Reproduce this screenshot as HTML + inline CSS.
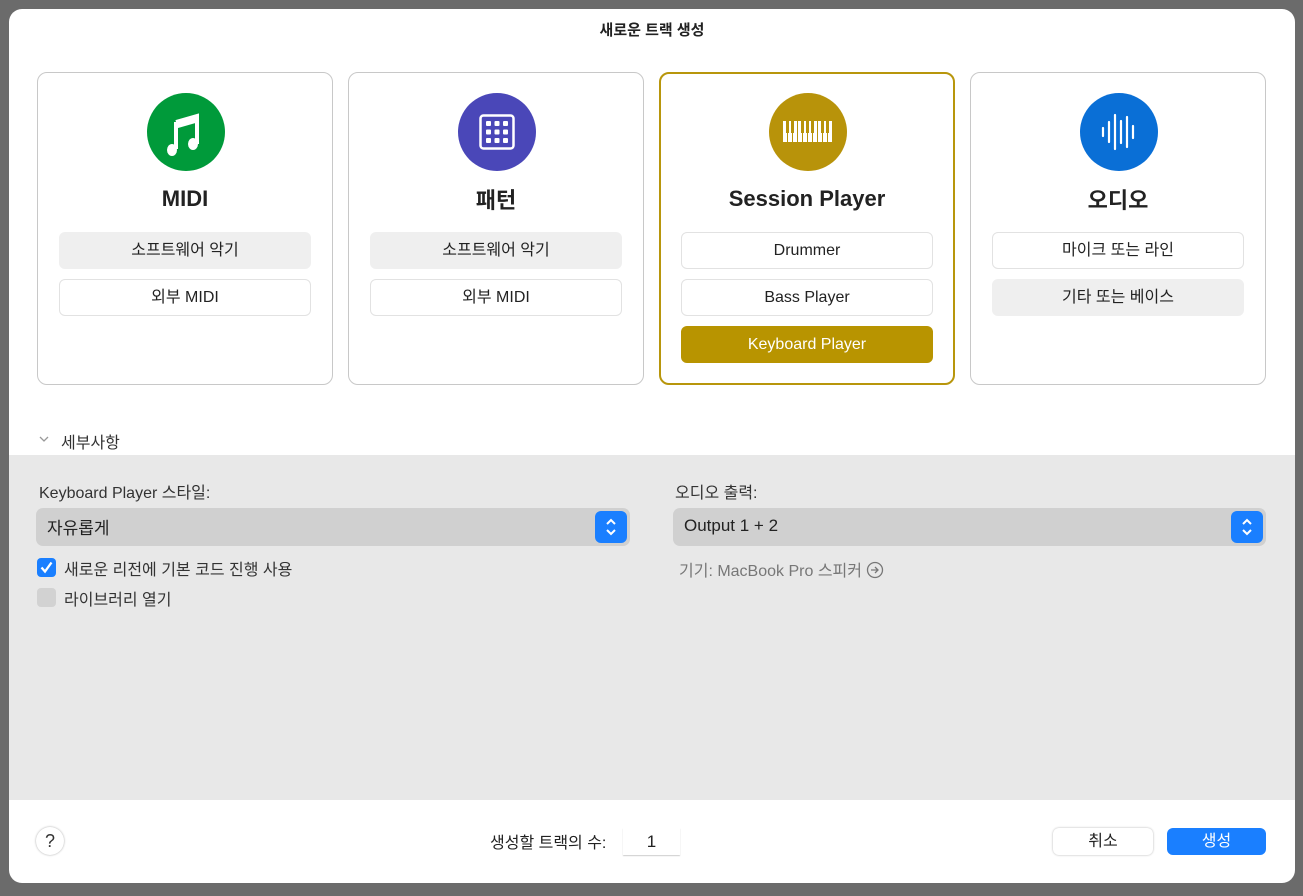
<!DOCTYPE html>
<html><head><meta charset="utf-8"><style>
*{box-sizing:border-box;margin:0;padding:0}
body{width:1303px;height:896px;background:#6b6b6b;font-family:"Liberation Sans","Noto Sans CJK KR",sans-serif;position:relative;overflow:hidden;color:#222}
.dlg{position:absolute;left:9px;top:9px;width:1286px;height:874px;background:#fff;border-radius:13px;overflow:hidden}
.title{position:absolute;top:10px;left:0;width:100%;text-align:center;font-size:15px;font-weight:bold;color:#222}
.card{position:absolute;top:63px;width:296px;height:313px;border:1.5px solid #c8c8c8;border-radius:10px;background:#fff}
.card.sel{border:2px solid #b8960c}
.circ{position:absolute;left:109px;top:20px;width:78px;height:78px;border-radius:50%}
.ct{position:absolute;top:113px;width:100%;text-align:center;font-size:22px;font-weight:bold;color:#222}
.ct.k{top:110px}
.btn{position:absolute;left:21px;width:252px;height:37px;border-radius:6px;font-size:16px;text-align:center;line-height:37px;color:#222}
.g{background:#efefef}
.w{background:#fff;border:1px solid #e2e2e2;line-height:35px}
.gray{position:absolute;left:0;top:446px;width:100%;height:345px;background:#e8e8e8}
.lbl{position:absolute;font-size:16px;color:#333}
.select{position:absolute;height:38px;background:#d0d0d0;border-radius:7px}
.step{position:absolute;right:3px;top:3px;width:32px;height:32px;background:#1a7fff;border-radius:6px}
.cb{position:absolute;width:19px;height:19px;border-radius:4px}
</style></head><body>
<div class="dlg">
<div class="title">새로운 트랙 생성</div>

<div class="card" style="left:28px">
 <div class="circ" style="background:#009a3a"><svg width="78" height="78" viewBox="0 0 78 78"><path d="M29 29 L50 23 L50 51" stroke="#fff" stroke-width="4" fill="none"/><path d="M29 29 L29 56" stroke="#fff" stroke-width="4"/><path d="M29 33 L50 27" stroke="#fff" stroke-width="5"/><ellipse cx="25" cy="57" rx="5" ry="6" fill="#fff"/><ellipse cx="46" cy="51" rx="5" ry="6" fill="#fff"/></svg></div>
 <div class="ct">MIDI</div>
 <div class="btn g" style="top:159px">소프트웨어 악기</div>
 <div class="btn w" style="top:206px">외부 MIDI</div>
</div>

<div class="card" style="left:339px">
 <div class="circ" style="background:#4a47b8"><svg width="78" height="78" viewBox="0 0 78 78"><rect x="22.5" y="22.5" width="33" height="33" rx="3" stroke="#fff" stroke-width="2.5" fill="none"/><g fill="#fff"><rect x="28" y="28" width="5" height="5" rx="1"/><rect x="36.5" y="28" width="5" height="5" rx="1"/><rect x="45" y="28" width="5" height="5" rx="1"/><rect x="28" y="36.5" width="5" height="5" rx="1"/><rect x="36.5" y="36.5" width="5" height="5" rx="1"/><rect x="45" y="36.5" width="5" height="5" rx="1"/><rect x="28" y="45" width="5" height="5" rx="1"/><rect x="36.5" y="45" width="5" height="5" rx="1"/><rect x="45" y="45" width="5" height="5" rx="1"/></g></svg></div>
 <div class="ct k">패턴</div>
 <div class="btn g" style="top:159px">소프트웨어 악기</div>
 <div class="btn w" style="top:206px">외부 MIDI</div>
</div>

<div class="card sel" style="left:650px">
 <div class="circ" style="background:#b8930a;left:108px;top:19px"><svg width="78" height="78" viewBox="0 0 78 78"><g fill="#fff"><rect x="14" y="28" width="4" height="21"/><rect x="19" y="28" width="4" height="21"/><rect x="24" y="28" width="4" height="21"/><rect x="29" y="28" width="4" height="21"/><rect x="34" y="28" width="4" height="21"/><rect x="39" y="28" width="4" height="21"/><rect x="44" y="28" width="4" height="21"/><rect x="49" y="28" width="4" height="21"/><rect x="54" y="28" width="4" height="21"/><rect x="59" y="28" width="4" height="21"/></g><g fill="#b8930a"><rect x="17" y="28" width="3" height="12"/><rect x="22" y="28" width="3" height="12"/><rect x="32" y="28" width="3" height="12"/><rect x="37" y="28" width="3" height="12"/><rect x="42" y="28" width="3" height="12"/><rect x="52" y="28" width="3" height="12"/><rect x="57" y="28" width="3" height="12"/></g></svg></div>
 <div class="ct" style="top:112px">Session Player</div>
 <div class="btn w" style="top:158px;left:20px">Drummer</div>
 <div class="btn w" style="top:205px;left:20px">Bass Player</div>
 <div class="btn" style="top:252px;left:20px;background:#b89400;color:#fff">Keyboard Player</div>
</div>

<div class="card" style="left:961px">
 <div class="circ" style="background:#0a6fd6"><svg width="78" height="78" viewBox="0 0 78 78"><g stroke="#fff" stroke-width="2.2" stroke-linecap="round"><line x1="23" y1="35" x2="23" y2="43"/><line x1="29" y1="29" x2="29" y2="49"/><line x1="35" y1="22" x2="35" y2="56"/><line x1="41" y1="28" x2="41" y2="50"/><line x1="47" y1="24" x2="47" y2="54"/><line x1="53" y1="33" x2="53" y2="45"/></g></svg></div>
 <div class="ct k">오디오</div>
 <div class="btn w" style="top:159px">마이크 또는 라인</div>
 <div class="btn g" style="top:206px">기타 또는 베이스</div>
</div>

<svg style="position:absolute;left:30px;top:426px" width="10" height="8"><path d="M1 2 L5 6 L9 2" stroke="#999" stroke-width="1.3" fill="none"/></svg>
<div class="lbl" style="left:52px;top:420px">세부사항</div>

<div class="gray">
 <div class="lbl" style="left:30px;top:24px">Keyboard Player 스타일:</div>
 <div class="select" style="left:27px;top:53px;width:594px"><span style="position:absolute;left:11px;top:6px;font-size:17px">자유롭게</span><div class="step"><svg width="32" height="32"><path d="M12 13 L16 9 L20 13 M12 19 L16 23 L20 19" stroke="#fff" stroke-width="2" fill="none"/></svg></div></div>
 <div class="cb" style="left:28px;top:103px;background:#1a7fff"><svg width="19" height="19"><path d="M4.5 9.5 L8 13.5 L14.5 4.5" stroke="#fff" stroke-width="2.3" fill="none"/></svg></div>
 <div class="lbl" style="left:55px;top:101px">새로운 리전에 기본 코드 진행 사용</div>
 <div class="cb" style="left:28px;top:133px;background:#d2d2d2"></div>
 <div class="lbl" style="left:55px;top:131px">라이브러리 열기</div>

 <div class="lbl" style="left:666px;top:24px">오디오 출력:</div>
 <div class="select" style="left:664px;top:53px;width:593px"><span style="position:absolute;left:11px;top:8px;font-size:17px">Output 1 + 2</span><div class="step"><svg width="32" height="32"><path d="M12 13 L16 9 L20 13 M12 19 L16 23 L20 19" stroke="#fff" stroke-width="2" fill="none"/></svg></div></div>
 <div class="lbl" style="left:670px;top:102px;color:#777">기기: MacBook Pro 스피커 <svg width="18" height="18" style="vertical-align:-3px"><circle cx="9" cy="9" r="7.5" stroke="#777" stroke-width="1.3" fill="none"/><path d="M5 9 H12 M9 6 L12 9 L9 12" stroke="#777" stroke-width="1.3" fill="none"/></svg></div>
</div>

<div style="position:absolute;left:27px;top:818px;width:28px;height:28px;border-radius:50%;background:#fff;box-shadow:0 0 2px rgba(0,0,0,.35);text-align:center;line-height:28px;font-size:18px;color:#333">?</div>
<div class="lbl" style="left:481px;top:820px;color:#222">생성할 트랙의 수:</div>
<div style="position:absolute;left:614px;top:819px;width:57px;height:27px;background:#fff;box-shadow:0 1px 1px rgba(0,0,0,.2);text-align:center;line-height:27px;font-size:17px">1</div>
<div style="position:absolute;left:1044px;top:819px;width:100px;height:27px;background:#fff;border-radius:6px;box-shadow:0 0 2px rgba(0,0,0,.3);text-align:center;line-height:27px;font-size:16px">취소</div>
<div style="position:absolute;left:1158px;top:819px;width:99px;height:27px;background:#1a7fff;border-radius:6px;color:#fff;text-align:center;line-height:27px;font-size:16px">생성</div>
</div>
</body></html>
